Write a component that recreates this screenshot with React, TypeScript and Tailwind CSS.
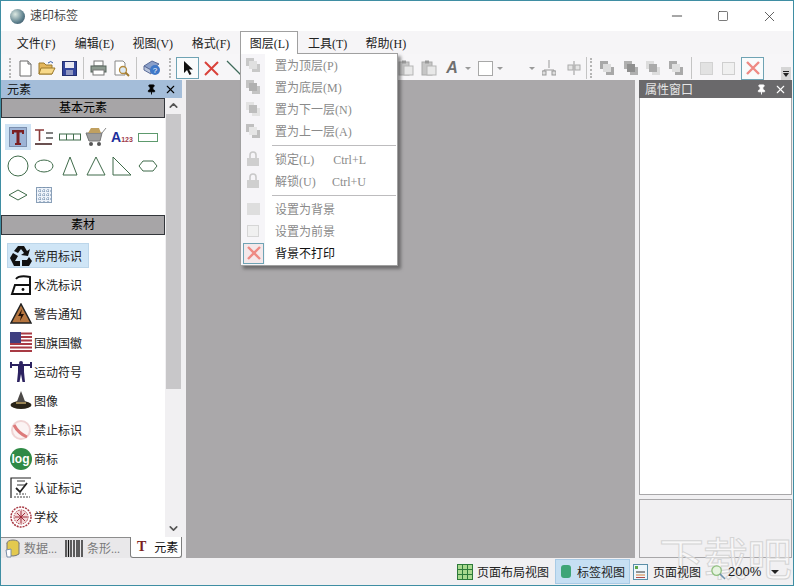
import type { ReactNode } from "react";
import { X, Minus, Square, Pin, ChevronUp, ChevronDown } from "lucide-react";

const FONT = "font-['Liberation_Serif','Noto_Sans_CJK_SC',serif]";

const menus = ["文件(F)", "编辑(E)", "视图(V)", "格式(F)", "图层(L)", "工具(T)", "帮助(H)"];

function Sep() {
  return <div className="w-px h-[22px] bg-[#c4c4c4] mx-[3px]" />;
}

function Grip() {
  return <div className="w-[2px] h-[20px] mx-[3px] border-l-2 border-dotted border-[#b5b5b5]" />;
}

function Tool({ children, w = 22 }: { children: ReactNode; w?: number }) {
  return (
    <div className="flex items-center justify-center h-[22px] shrink-0" style={{ width: w }}>
      {children}
    </div>
  );
}

function Stack({ dark, light }: { dark: string; light: string }) {
  return (
    <svg width="16" height="16" viewBox="0 0 16 16">
      <rect x="1" y="1" width="8" height="8" fill={dark} />
      <rect x="7" y="7" width="8" height="8" fill={dark} />
      <rect x="4" y="4" width="8" height="8" fill={light} />
    </svg>
  );
}

function DisabledX({ size = 16 }: { size?: number }) {
  return (
    <svg width={size} height={size} viewBox="0 0 16 16">
      <path d="M2 2L14 14M14 2L2 14" stroke="#ee8a84" strokeWidth="2.4" />
    </svg>
  );
}

function Lock() {
  return (
    <svg width="14" height="16" viewBox="0 0 14 16">
      <path d="M4 7V4a3 3 0 0 1 6 0v3" fill="none" stroke="#c9c9c9" strokeWidth="1.6" />
      <rect x="1" y="7" width="12" height="8" fill="#cfcfcf" />
    </svg>
  );
}

function Clipboard() {
  return (
    <svg width="16" height="16" viewBox="0 0 16 16">
      <rect x="1" y="2" width="10" height="13" fill="#c6c6c6" stroke="#aaa" />
      <rect x="4" y="0.5" width="4" height="3" fill="#999" />
      <rect x="6" y="6" width="9" height="9" fill="#e8e8e8" stroke="#b5b5b5" />
    </svg>
  );
}

function Toolbar() {
  return (
    <div className="h-[26px] bg-[#f7f6f8] flex items-center pl-[5px] pt-[2px] relative">
      <Grip />
      <Tool>
        <svg width="15" height="17" viewBox="0 0 15 17">
          <path d="M2 1H10L13 4V16H2Z" fill="#fff" stroke="#6a6a6a" />
          <path d="M10 1V4H13" fill="#ddd" stroke="#6a6a6a" />
        </svg>
      </Tool>
      <Tool>
        <svg width="18" height="16" viewBox="0 0 18 16">
          <path d="M1 3H6L8 5H14V14H1Z" fill="#e3b65c" stroke="#9c7a2c" />
          <path d="M3 8H17L14 14H1Z" fill="#f7d98a" stroke="#9c7a2c" />
          <path d="M10 3Q13 0 15 3" fill="none" stroke="#3a5fa8" />
        </svg>
      </Tool>
      <Tool>
        <svg width="15" height="15" viewBox="0 0 15 15">
          <rect x="0.5" y="0.5" width="14" height="14" fill="#33459b" stroke="#232f6e" />
          <rect x="3" y="1" width="9" height="6" fill="#e8e8f2" />
          <rect x="4" y="9" width="7" height="5" fill="#8f96c0" />
        </svg>
      </Tool>
      <Sep />
      <Tool>
        <svg width="17" height="16" viewBox="0 0 17 16">
          <rect x="4" y="1" width="9" height="5" fill="#fff" stroke="#777" />
          <rect x="1" y="6" width="15" height="6" fill="#8d9a90" stroke="#55625a" />
          <rect x="3" y="10" width="11" height="5" fill="#fff" stroke="#777" />
        </svg>
      </Tool>
      <Tool w={24}>
        <svg width="17" height="17" viewBox="0 0 17 17">
          <path d="M2 1H10L12 3V15H2Z" fill="#fff" stroke="#888" />
          <circle cx="10" cy="10" r="3.5" fill="#dbe9f5" stroke="#b58a3a" strokeWidth="1.3" />
          <path d="M12.5 12.5L16 16" stroke="#a07a30" strokeWidth="2" />
        </svg>
      </Tool>
      <Sep />
      <Tool w={24}>
        <svg width="18" height="18" viewBox="0 0 18 18">
          <path d="M1 7L9 2L16 5L8 11Z" fill="#8a9fc9" stroke="#5a6c99" />
          <path d="M1 7V11L8 15L8 11Z" fill="#b8c4dc" stroke="#5a6c99" />
          <circle cx="12" cy="11" r="5" fill="#3f78c8" />
          <text x="12" y="14" textAnchor="middle" fontSize="8" fill="#fff" fontFamily="Liberation Sans">?</text>
        </svg>
      </Tool>
      <div className="w-[2px]" />
      <Grip />
      <div className="w-[23px] h-[22px] border border-[#6fa3b4] bg-[#f9fbfc] flex items-center justify-center ml-[2px]">
        <svg width="12" height="16" viewBox="0 0 12 16">
          <path d="M2 1V13L5 10L7.5 15L9.5 14L7 9.5H11Z" fill="#111" />
        </svg>
      </div>
      <Tool w={24}>
        <svg width="15" height="15" viewBox="0 0 15 15">
          <path d="M1 1L14 14M14 1L1 14" stroke="#d9413a" strokeWidth="2" />
        </svg>
      </Tool>
      <Tool w={22}>
        <svg width="16" height="16" viewBox="0 0 16 16">
          <path d="M1 1L15 15" stroke="#3f6a5a" strokeWidth="1.2" />
        </svg>
      </Tool>
      {/* 菜单右侧的灰色工具 */}
      <div className="ml-[149px] flex items-center">
        <Tool w={23}><Clipboard /></Tool>
        <Tool w={23}><Clipboard /></Tool>
        <span className="ml-[2px] w-[20px] text-center font-['Liberation_Sans',sans-serif] font-bold italic text-[16px] text-[#6f6f6f] leading-none">A</span>
        <span className="h-0 w-0 border-x-[3px] border-t-[3px] border-x-transparent border-t-[#9a9a9a] ml-[3px]" />
        <div className="w-[15px] h-[15px] border border-[#a8a8a8] bg-white ml-[7px]" />
        <span className="h-0 w-0 border-x-[3px] border-t-[3px] border-x-transparent border-t-[#9a9a9a] ml-[4px]" />
        <span className="h-0 w-0 border-x-[3px] border-t-[3px] border-x-transparent border-t-[#9a9a9a] ml-[26px]" />
        <Tool w={28}>
          <svg width="14" height="16" viewBox="0 0 14 16">
            <path d="M7 0V8M2 15V10H12V15" fill="none" stroke="#999" />
            <rect x="0" y="11" width="4" height="4" fill="#ddd" stroke="#999" />
            <rect x="10" y="11" width="4" height="4" fill="#ddd" stroke="#999" />
          </svg>
        </Tool>
        <Tool w={22}>
          <svg width="14" height="14" viewBox="0 0 14 14">
            <path d="M7 0V14" stroke="#999" />
            <rect x="1" y="4" width="5" height="5" fill="#e5e5e5" stroke="#aaa" />
            <rect x="8" y="4" width="5" height="5" fill="#e5e5e5" stroke="#aaa" />
          </svg>
        </Tool>
      </div>
      <div className="w-px h-[22px] bg-[#c4c4c4] ml-[1px]" />
      <Grip />
      <Tool w={24}><Stack dark="#a8a8a8" light="#dcdcdc" /></Tool>
      <Tool w={23}><Stack dark="#b0b0b0" light="#8f8f8f" /></Tool>
      <Tool w={22}><Stack dark="#dddddd" light="#aaaaaa" /></Tool>
      <Tool w={24}><Stack dark="#aaaaaa" light="#e0e0e0" /></Tool>
      <Sep />
      <Tool w={22}><div className="w-[13px] h-[13px] bg-[#e2e2e2] border border-[#d2d2d2]" /></Tool>
      <Tool w={22}><div className="w-[13px] h-[13px] bg-[#f0f0f0] border border-[#cfcfcf]" /></Tool>
      <div className="w-[23px] h-[23px] ml-[2px] border border-[#6fa3b4] bg-[#f9fbfc] flex items-center justify-center">
        <DisabledX />
      </div>
      <div className="ml-auto mr-[2px] w-[10px] h-[13px] self-end bg-[#d6d6d6] flex flex-col items-center justify-center gap-[1px]">
        <div className="w-[6px] h-px bg-[#222]" />
        <div className="h-0 w-0 border-x-[3px] border-t-[4px] border-x-transparent border-t-[#222]" />
      </div>
    </div>
  );
}

function PanelHeader({ title, active }: { title: string; active: boolean }) {
  return (
    <div
      className={`h-[18px] flex items-center pl-[6px] pr-[5px] pt-[1px] text-[12px] ${
        active ? "bg-[#a4bdd9] text-[#111]" : "bg-[#6a696b] text-[#e6e6e6]"
      }`}
    >
      <span className="flex-1 leading-none pt-[1px]">{title}</span>
      <Pin size={11} className={`mr-[7px] ${active ? "text-black" : "text-white"}`} fill="currentColor" />
      <X size={13} strokeWidth={2} className={active ? "text-black" : "text-white"} />
    </div>
  );
}

function SectionBar({ title }: { title: string }) {
  return (
    <div className="h-[20px] bg-[#a7a5a7] border border-[#33363b] flex items-center justify-center text-[12px] text-black leading-none">
      {title}
    </div>
  );
}

const shapeStroke = "#3f6b4a";

function Shape({ children, active }: { children: ReactNode; active?: boolean }) {
  return (
    <div
      className={`w-[26px] h-[26px] flex items-center justify-center ${active ? "bg-[#cfe3f5]" : ""}`}
    >
      {children}
    </div>
  );
}

function BasicElements() {
  return (
    <div className="grid grid-cols-[repeat(6,26px)] gap-y-[3px] pl-[4px] pt-[6px] h-[97px] items-start content-start">
      <Shape active>
        <svg width="18" height="20" viewBox="0 0 18 20">
          <rect x="0.5" y="0.5" width="17" height="19" fill="#9db4d6" stroke="#7b8fae" />
          <path d="M3 3H15V7H13V5.5H10.5V16H12V18H6V16H7.5V5.5H5V7H3Z" fill="#7a1f22" />
        </svg>
      </Shape>
      <Shape>
        <svg width="20" height="20" viewBox="0 0 20 20">
          <path d="M1 3H10M5.5 3V14" stroke="#8a3a3a" strokeWidth="1.6" />
          <path d="M12 6H19M12 11H19" stroke="#555" strokeWidth="1.6" />
          <path d="M1 17H18" stroke="#6a5050" strokeWidth="2" />
        </svg>
      </Shape>
      <Shape>
        <svg width="22" height="8" viewBox="0 0 22 8">
          <rect x="0.5" y="1" width="21" height="6" fill="#fff" stroke={shapeStroke} />
          <path d="M7.5 1V7M14.5 1V7" stroke={shapeStroke} />
        </svg>
      </Shape>
      <Shape>
        <svg width="22" height="20" viewBox="0 0 22 20">
          <path d="M1 6H17L15 14H4Z" fill="#9d9d9d" stroke="#777" />
          <path d="M3 6L6 1H14L16 6Z" fill="#c0a060" />
          <path d="M17 6L21 1" stroke="#888" />
          <circle cx="6" cy="17" r="2" fill="#555" />
          <circle cx="14" cy="17" r="2" fill="#555" />
        </svg>
      </Shape>
      <Shape>
        <div className="flex items-baseline font-['Liberation_Sans',sans-serif] font-bold leading-none">
          <span className="text-[14px] text-[#1d2f9c]">A</span>
          <span className="text-[7px] text-[#a03a4a]">123</span>
        </div>
      </Shape>
      <Shape>
        <div className="w-[20px] h-[9px] border border-[#5d9a6d] bg-white" />
      </Shape>
      <Shape>
        <svg width="22" height="22" viewBox="0 0 22 22"><circle cx="11" cy="11" r="10" fill="none" stroke={shapeStroke} /></svg>
      </Shape>
      <Shape>
        <svg width="20" height="14" viewBox="0 0 20 14"><ellipse cx="10" cy="7" rx="9" ry="6" fill="none" stroke={shapeStroke} /></svg>
      </Shape>
      <Shape>
        <svg width="16" height="20" viewBox="0 0 16 20"><path d="M8 1L15 19H1Z" fill="none" stroke={shapeStroke} /></svg>
      </Shape>
      <Shape>
        <svg width="20" height="20" viewBox="0 0 20 20"><path d="M10 1L19 19H1Z" fill="none" stroke={shapeStroke} /></svg>
      </Shape>
      <Shape>
        <svg width="20" height="20" viewBox="0 0 20 20"><path d="M1 1L19 19H1Z" fill="none" stroke={shapeStroke} /></svg>
      </Shape>
      <Shape>
        <svg width="20" height="12" viewBox="0 0 20 12"><path d="M5 1H15L19 6L15 11H5L1 6Z" fill="none" stroke={shapeStroke} /></svg>
      </Shape>
      <Shape>
        <svg width="20" height="12" viewBox="0 0 20 12"><path d="M10 1L19 6L10 11L1 6Z" fill="none" stroke={shapeStroke} /></svg>
      </Shape>
      <Shape>
        <svg width="16" height="16" viewBox="0 0 16 16">
          <rect x="0.5" y="0.5" width="15" height="15" fill="#eef3fa" stroke="#8aa0b8" />
          <path d="M0 4H16M0 8H16M0 12H16M4 0V16M8 0V16M12 0V16" stroke="#6c88a8" strokeDasharray="1 1" />
        </svg>
      </Shape>
    </div>
  );
}

const materials: { label: string; icon: ReactNode }[] = [
  {
    label: "常用标识",
    icon: (
      <svg width="24" height="22" viewBox="0 0 24 22">
        <path d="M9 1H15L18 6L21 4L19 11L12 10L15 8L12 4L9 8L5 6Z" fill="#111" />
        <path d="M1 13L4 8L9 11L6 16H11V21H5Z" fill="#111" />
        <path d="M13 15H18L20 12L23 16L20 21H17L13 21Z" fill="#111" />
      </svg>
    ),
  },
  {
    label: "水洗标识",
    icon: (
      <svg width="22" height="22" viewBox="0 0 22 22">
        <path d="M2 20L5 11H20V20Z" fill="none" stroke="#111" strokeWidth="2" />
        <path d="M6 5Q9 1 20 3V11" fill="none" stroke="#111" strokeWidth="2" />
        <circle cx="13" cy="15.5" r="1.4" fill="#111" />
      </svg>
    ),
  },
  {
    label: "警告通知",
    icon: (
      <svg width="22" height="21" viewBox="0 0 22 21">
        <path d="M11 1L21 20H1Z" fill="#b5753f" stroke="#222" strokeWidth="1.5" />
        <path d="M12 6L8 13H11L10 18L14 11H11Z" fill="#241208" />
      </svg>
    ),
  },
  {
    label: "国旗国徽",
    icon: (
      <svg width="22" height="22" viewBox="0 0 22 22">
        <rect width="22" height="22" fill="#fff" />
        <path d="M0 1.5H22M0 5H22M0 8.5H22M0 12H22M0 15.5H22M0 19H22" stroke="#a83a44" strokeWidth="1.8" />
        <rect width="11" height="11" fill="#3f3f80" />
      </svg>
    ),
  },
  {
    label: "运动符号",
    icon: (
      <svg width="22" height="22" viewBox="0 0 22 22">
        <path d="M0 4H22" stroke="#2c2260" strokeWidth="2" />
        <path d="M1 1V7M21 1V7" stroke="#2c2260" strokeWidth="2" />
        <circle cx="11" cy="2" r="2" fill="#2c2260" />
        <path d="M8 4H14V11L15 21H12.5L11 13L9.5 21H7L8 11Z" fill="#2c2260" />
      </svg>
    ),
  },
  {
    label: "图像",
    icon: (
      <svg width="22" height="19" viewBox="0 0 22 19">
        <ellipse cx="11" cy="14" rx="10.5" ry="4" fill="#2a2418" />
        <path d="M6 13L11 0L16 13Z" fill="#4d4a48" />
        <path d="M6 12H16" stroke="#b59a5a" strokeWidth="1.5" />
      </svg>
    ),
  },
  {
    label: "禁止标识",
    icon: (
      <svg width="22" height="22" viewBox="0 0 22 22">
        <circle cx="11" cy="11" r="9" fill="#fbf3f3" stroke="#f0d4d4" strokeWidth="2" />
        <path d="M4 6Q8 14 17 18" fill="none" stroke="#dd7a7a" strokeWidth="3" />
      </svg>
    ),
  },
  {
    label: "商标",
    icon: (
      <div className="w-[22px] h-[22px] rounded-full bg-[#2f8a45] flex items-center justify-center text-[12px] leading-none text-white font-['Liberation_Sans',sans-serif] font-bold">
        log
      </div>
    ),
  },
  {
    label: "认证标记",
    icon: (
      <svg width="22" height="22" viewBox="0 0 22 22">
        <path d="M1 21V1H21" fill="none" stroke="#222" strokeWidth="1.2" />
        <path d="M7 8H16M7 4H15" stroke="#333" />
        <path d="M6 11L10 15L17 6" fill="none" stroke="#222" strokeWidth="1.8" />
        <path d="M4 20H20M6 17H16" stroke="#444" strokeDasharray="2 1" />
      </svg>
    ),
  },
  {
    label: "学校",
    icon: (
      <svg width="22" height="22" viewBox="0 0 22 22">
        <circle cx="11" cy="11" r="10" fill="#fff" stroke="#a83a44" strokeWidth="1.5" strokeDasharray="2 1" />
        <circle cx="11" cy="11" r="7" fill="#f3d8d8" stroke="#a83a44" strokeDasharray="1.5 1" />
        <path d="M7 7L15 15M15 7L7 15M11 5V17M5 11H17" stroke="#a02a38" />
      </svg>
    ),
  },
];

function ElementsPanel() {
  return (
    <div className="w-[181px] shrink-0 flex flex-col min-h-0">
      <PanelHeader title="元素" active />
      <div className="flex-1 flex min-h-0">
        <div className="w-[164px] bg-white flex flex-col">
          <SectionBar title="基本元素" />
          <BasicElements />
          <SectionBar title="素材" />
          <div className="flex-1 flex flex-col pl-[6px] pt-[8px] overflow-hidden">
            {materials.map((m, i) => (
              <div
                key={m.label}
                className={`shrink-0 flex items-center text-[12px] text-[#222] ${
                  i === 0 ? "w-[82px] bg-[#cfe5f6] shadow-[inset_0_0_0_1px_#bcd6ea] h-[25px] mb-[2px]" : "h-[29px]"
                }`}
              >
                <span className="w-[27px] h-[22px] flex items-center justify-center shrink-0">{m.icon}</span>
                <span className="pt-[2px]">{m.label}</span>
              </div>
            ))}
          </div>
        </div>
        <div className="w-[15px] ml-px bg-[#f1f0f2] flex flex-col items-center">
          <ChevronUp size={13} strokeWidth={3} className="text-[#555] mt-[1px]" />
          <div className="w-full h-[275px] bg-[#c8c7c9] mt-[2px]" />
          <div className="flex-1" />
          <ChevronDown size={13} strokeWidth={3} className="text-[#555] mb-[2px]" />
        </div>
      </div>
      <div className="h-[21px] flex items-stretch bg-[#e9e8ea] border-t border-[#8d8d8d] text-[12px]">
        <div className="w-[64px] flex items-center gap-[4px] pl-[4px] text-[#7a7a7a]">
          <svg width="15" height="19" viewBox="0 0 15 19">
            <ellipse cx="8" cy="4" rx="6" ry="3" fill="#e3c94f" stroke="#777" />
            <path d="M2 4V15Q8 19 14 15V4" fill="#e3c94f" stroke="#777" />
            <path d="M1 11L6 10V18H2Z" fill="#fff" stroke="#7a8ea8" />
          </svg>
          <span className="pt-[2px]">数据...</span>
        </div>
        <div className="w-[65px] flex items-center gap-[4px] text-[#7a7a7a]">
          <svg width="18" height="17" viewBox="0 0 18 17">
            <path d="M1 0V17M3.5 0V17M6 0V17M9 0V17M12 0V17M14 0V17M17 0V17" stroke="#111" strokeWidth="1.3" />
          </svg>
          <span className="pt-[2px]">条形...</span>
        </div>
        <div className="w-[52px] flex items-center gap-[8px] pl-[6px] bg-white border-x border-b border-[#7d7d7d] rounded-b-[3px] text-[#111] mt-[-1px]">
          <span className="font-['Liberation_Serif',serif] font-bold text-[#7a1f22] text-[14px] leading-none">T</span>
          <span className="pt-[2px]">元素</span>
        </div>
      </div>
    </div>
  );
}

function PropertyPanel() {
  return (
    <div className="w-[153px] mr-px shrink-0 flex flex-col">
      <PanelHeader title="属性窗口" active={false} />
      <div className="h-[397px] bg-white border-x border-b border-[#a8a7a9]" />
      <div className="flex-1 mt-[4px] border border-[#a8a7a9] bg-[#f1f0f2]" />
    </div>
  );
}

type MenuRow = { label: string; key?: string; icon: ReactNode } | "sep";

const layerMenu: MenuRow[] = [
  { label: "置为顶层(P)", icon: <Stack dark="#c8c8c8" light="#e0e0e0" /> },
  { label: "置为底层(M)", icon: <Stack dark="#c4c4c4" light="#b0b0b0" /> },
  { label: "置为下一层(N)", icon: <Stack dark="#e3e3e3" light="#bdbdbd" /> },
  { label: "置为上一层(A)", icon: <Stack dark="#c0c0c0" light="#e6e6e6" /> },
  "sep",
  { label: "锁定(L)", key: "Ctrl+L", icon: <Lock /> },
  { label: "解锁(U)", key: "Ctrl+U", icon: <Lock /> },
  "sep",
  { label: "设置为背景", icon: <div className="w-[13px] h-[12px] bg-[#dedede]" /> },
  { label: "设置为前景", icon: <div className="w-[12px] h-[12px] bg-[#f0f0f0] border border-[#d6d6d6]" /> },
];

function LayerMenu() {
  return (
    <div className="absolute left-[239px] top-[52px] w-[158px] h-[213px] bg-white border border-[#a0a0a0] shadow-[3px_3px_3px_rgba(60,60,60,0.55)] z-10 flex flex-col pl-[1px] text-[12px]">
      <div className="absolute left-0 top-0 bottom-0 w-[24px] bg-[#f6f5f8]" />
      {layerMenu.map((row, i) =>
        row === "sep" ? (
          <div key={i} className="relative h-[6px] ml-[30px] mr-[1px] pt-[3px]">
            <div className="h-px w-full bg-[#bdbcbe]" />
          </div>
        ) : (
          <div key={i} className="relative h-[22px] flex items-center text-[#8a8a8a]">
            <span className="w-[22px] flex justify-center shrink-0">{row.icon}</span>
            <span className="ml-[11px] w-[91px] pt-[2px] flex justify-between whitespace-nowrap">
              <span>{row.label}</span>
              {row.key && <span>{row.key}</span>}
            </span>
          </div>
        )
      )}
      <div className="relative h-[22px] flex items-center text-[#111]">
        <span className="w-[21px] h-[21px] ml-[1px] border border-[#6fa3b4] bg-[#f4e8ea] flex items-center justify-center shrink-0">
          <DisabledX />
        </span>
        <span className="ml-[11px] pt-[2px]">背景不打印</span>
      </div>
    </div>
  );
}

export default function App() {
  return (
    <div className={`relative w-[794px] h-[586px] overflow-hidden flex flex-col border border-[#3f8ea3] bg-[#f1f0f2] ${FONT}`}>
      {/* 标题栏 */}
      <div className="h-[30px] shrink-0 bg-white flex items-center">
        <div className="w-[15px] h-[15px] rounded-full ml-[9px] bg-[radial-gradient(circle_at_35%_35%,#dce8e2,#5c7f8c_60%,#2b3d52)]" />
        <span className="ml-[5px] text-[12px] text-[#444]">速印标签</span>
        <div className="ml-auto flex items-center text-[#222] mr-px">
          <span className="w-[46px] flex justify-center"><Minus size={16} strokeWidth={1.2} /></span>
          <span className="w-[46px] flex justify-center"><Square size={12} strokeWidth={1.2} /></span>
          <span className="w-[46px] flex justify-center"><X size={17} strokeWidth={1} /></span>
        </div>
      </div>
      {/* 菜单栏 */}
      <div className="h-[23px] shrink-0 bg-[#f6f5f7] flex items-center pl-[6px] text-[12px] text-[#222]">
        {menus.map((m) => (
          <div
            key={m}
            className={`h-[23px] w-[58.3px] pt-[2px] flex items-center justify-center whitespace-nowrap ${
              m === "图层(L)" ? "border border-b-0 border-[#a0a0a0] bg-white relative z-20" : ""
            }`}
          >
            {m}
          </div>
        ))}
      </div>
      <Toolbar />
      {/* 主体 */}
      <div className="flex-1 flex min-h-0">
        <ElementsPanel />
        <div className="w-[4px]" />
        <div className="flex-1 bg-[#aaa8aa] mr-[4px]" />
        <PropertyPanel />
      </div>
      {/* 状态栏 */}
      <div className="relative z-30 h-[27px] shrink-0 flex items-center pl-[456px] text-[12px] text-[#222]">
        <div className="flex items-center gap-[4px] h-full">
          <svg width="16" height="16" viewBox="0 0 16 16">
            <rect x="0.5" y="0.5" width="15" height="15" fill="#a9d98f" stroke="#2d7a3a" />
            <path d="M5.5 0V16M10.5 0V16M0 5.5H16M0 10.5H16" stroke="#2d7a3a" />
          </svg>
          <span className="whitespace-nowrap pt-[2px]">页面布局视图</span>
        </div>
        <div className="flex items-center gap-[6px] h-[25px] w-[75px] ml-[6px] pl-[5px] bg-[#c6dff3] border border-[#a9cbe6]">
          <div className="w-[10px] h-[13px] rounded-[3px] bg-[#3ea577] shrink-0" />
          <span className="whitespace-nowrap pt-[2px]">标签视图</span>
        </div>
        <div className="flex items-center gap-[5px] ml-[3px]">
          <svg width="15" height="16" viewBox="0 0 15 16">
            <rect x="0.5" y="0.5" width="14" height="15" fill="#eef6fb" stroke="#5b8fa8" />
            <rect x="2" y="2" width="3" height="3" fill="#5fa84a" />
            <path d="M3 8H12" stroke="#333" />
            <path d="M3 11H12" stroke="#d9823a" />
            <path d="M3 13.5H12" stroke="#b04a4a" />
          </svg>
          <span className="whitespace-nowrap pt-[2px]">页面视图</span>
        </div>
        <svg width="16" height="16" viewBox="0 0 17 17" className="ml-[9px] shrink-0">
          <circle cx="7" cy="7" r="5" fill="#e6f3e0" stroke="#8fc07e" strokeWidth="1.4" />
          <path d="M10.5 10.5L16 16" stroke="#6f93ad" strokeWidth="1.6" />
        </svg>
        <span className="ml-[2px] text-[13px] font-['Liberation_Sans',sans-serif]">200%</span>
        <div className="ml-[10px] h-0 w-0 border-x-[4px] border-t-[4px] border-x-transparent border-t-[#222]" />
      </div>
      <LayerMenu />
      {/* 水印 */}
      <div className="absolute right-[2px] bottom-[6px] z-20 text-[45px] leading-none tracking-[-1px] text-white/50 [-webkit-text-stroke:1px_#d4d4d4] font-['Noto_Sans_CJK_SC',sans-serif] pointer-events-none">
        下载吧
      </div>
    </div>
  );
}
